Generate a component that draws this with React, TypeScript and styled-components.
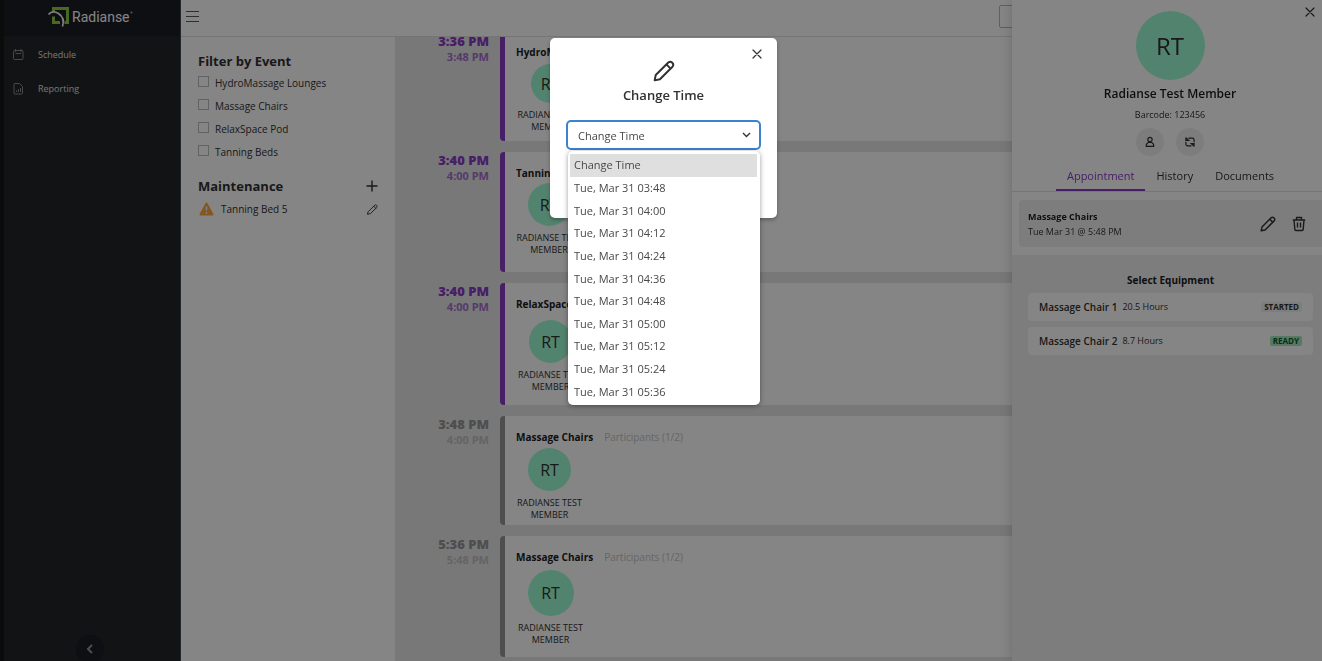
import React from "react";
import styled, { createGlobalStyle } from "styled-components";

const Global = createGlobalStyle`
  *, *::before, *::after { box-sizing: border-box; }
  body {
    margin: 0;
    overflow: hidden;
    background: #fff;
    color: #323130;
    font-family: "Open Sans", "Noto Sans", sans-serif;
    font-size: 11px;
    line-height: 16px;
  }
  h1, h2, h3, p, ul { margin: 0; padding: 0; list-style: none; }
  button { font: inherit; color: inherit; background: none; border: 0; padding: 0; display: inline-flex; align-items: center; justify-content: center; }
  a { color: inherit; text-decoration: none; }
  svg { display: block; flex: none; }
`;

const Shell = styled.div`
  display: flex;
  height: 100vh;
  overflow: hidden;
`;

const Sidebar = styled.aside`
  flex: 0 0 181px;
  display: flex;
  flex-direction: column;
  align-items: center;
  background: #232528;
  border-left: 4px solid #141614;
  border-right: 1px solid #47494b;
`;

const Brand = styled.a`
  align-self: stretch;
  height: 36px;
  display: flex;
  justify-content: center;
  background: #1b1d25;
`;

const NavList = styled.nav`
  flex: 1;
  align-self: stretch;
  display: flex;
  flex-direction: column;
  padding-top: 2px;
`;

const NavLink = styled.a`
  display: flex;
  align-items: center;
  gap: 14px;
  height: 34px;
  padding-left: 8px;
  color: #e0e0e0;
  font-size: 9px;
  svg { color: #8b8d90; }
`;

const Collapse = styled.button`
  width: 28px;
  height: 28px;
  margin: 0 4px -2px 0;
  border-radius: 50%;
  background: #1b1d25;
  color: #8d97a5;
`;

const Main = styled.div`
  flex: 1;
  min-width: 0;
  display: flex;
  flex-direction: column;
`;

const TopBar = styled.header`
  flex: none;
  height: 37px;
  display: flex;
  align-items: center;
  justify-content: space-between;
  padding: 0 120px 4px 5px;
  border-bottom: 1px solid #e1e1e1;
  color: #55585c;
`;

const SearchInput = styled.input`
  width: 203px;
  height: 23px;
  border: 1px solid #b8b8b8;
  border-radius: 2px;
  background: transparent;
`;

const Columns = styled.div`
  flex: 1;
  min-height: 0;
  display: flex;
`;

const Filters = styled.section`
  flex: 0 0 214px;
  display: flex;
  flex-direction: column;
  padding: 15px 17px 0 17px;
`;

const FilterTitle = styled.h2`
  font-size: 13px;
  line-height: 18px;
  font-weight: 700;
`;

const CheckList = styled.div`
  margin-top: 1px;
`;

const CheckRow = styled.label`
  display: flex;
  align-items: center;
  gap: 6px;
  height: 23px;
  font-size: 10px;
`;

const CheckBox = styled.input`
  appearance: none;
  width: 11px;
  height: 11px;
  margin: 0 0 2px;
  border: 1px solid #bdbdbd;
`;

const SplitRow = styled.div<{ $gap: number }>`
  display: flex;
  align-items: center;
  justify-content: space-between;
  height: 22px;
  margin-top: ${(p) => p.$gap}px;
  font-size: 10px;
`;

const Alert = styled.span`
  display: flex;
  align-items: center;
  gap: 7px;
  padding-left: 1px;
`;

const Timeline = styled.main`
  flex: 1;
  min-width: 0;
  overflow: hidden;
  display: flex;
  flex-direction: column;
  justify-content: flex-end;
  gap: 11px;
  padding-bottom: 4px;
  background: #e6e6e6;
`;

const Slot = styled.article<{ $height: number }>`
  flex: none;
  display: grid;
  grid-template-columns: 94px 1fr;
  column-gap: 11px;
  height: ${(p) => p.$height}px;
`;

const Times = styled.div<{ $active?: boolean }>`
  text-align: right;
  font-weight: 700;
  color: ${(p) => (p.$active ? "#8a3ac6" : "#969696")};
  strong { display: block; font-size: 13px; line-height: 16px; }
  span {
    display: block;
    font-size: 11px;
    line-height: 16px;
    color: ${(p) => (p.$active ? "#a56fcc" : "#c0c0c0")};
  }
`;

const Card = styled.div<{ $active?: boolean; $top: number }>`
  border-left: 5px solid ${(p) => (p.$active ? "#8a3ac6" : "#969696")};
  border-radius: 4px 0 0 4px;
  background: #fff;
  padding: ${(p) => p.$top}px 11px 0;
`;

const CardHead = styled.div`
  display: flex;
  gap: 11px;
  line-height: 16px;
  font-size: 10px;
  h3 { font-size: 10px; font-weight: 700; color: #1c1c1c; }
  span { color: #c4c4c4; }
`;

const Person = styled.div<{ $gap: number; $width: number }>`
  width: ${(p) => p.$width}px;
  margin-top: ${(p) => p.$gap}px;
  display: flex;
  flex-direction: column;
  align-items: center;
  gap: 6px;
  text-align: center;
  font-size: 9px;
  line-height: 12px;
`;

const Avatar = styled.div<{ $size: number; $font: number }>`
  width: ${(p) => p.$size}px;
  height: ${(p) => p.$size}px;
  border-radius: 50%;
  display: flex;
  align-items: center;
  justify-content: center;
  background: #9efcd5;
  font-size: ${(p) => p.$font}px;
`;

const Drawer = styled.aside`
  position: fixed;
  inset: 0 0 0 auto;
  width: 310px;
  display: flex;
  flex-direction: column;
  background: #fff;
  box-shadow: 0 0 12px rgba(0, 0, 0, 0.2);
`;

const Close = styled.button<{ $top: number; $right: number }>`
  position: absolute;
  top: ${(p) => p.$top}px;
  right: ${(p) => p.$right}px;
`;

const Profile = styled.header`
  display: flex;
  flex-direction: column;
  align-items: center;
  padding: 11px 0 6px 6px;
  h2 { margin: 6px 0; font-size: 12px; font-weight: 600; line-height: 16px; color: #1c1c1c; }
  p { font-size: 9px; line-height: 14px; }
`;

const Actions = styled.div`
  display: flex;
  gap: 12px;
  margin-top: 6px;
  button { width: 28px; height: 28px; border-radius: 50%; background: #efefef; }
`;

const Tabs = styled.nav`
  display: flex;
  justify-content: center;
  padding-left: 7px;
  border-bottom: 1px solid #e1e1e1;
`;

const Tab = styled.button<{ $active?: boolean }>`
  height: 29px;
  padding: 1px 11px 0;
  border-bottom: 2px solid ${(p) => (p.$active ? "#8a3ac6" : "transparent")};
  color: ${(p) => (p.$active ? "#8a3ac6" : "#323130")};
`;

const Booking = styled.section`
  display: flex;
  align-items: center;
  justify-content: space-between;
  height: 47px;
  margin: 8px 0 8px 7px;
  padding: 0 16px 0 9px;
  border-radius: 4px 0 0 4px;
  background: #f0f0f0;
  font-size: 9px;
  line-height: 15px;
  h3 { font-size: 9px; font-weight: 700; color: #1c1c1c; }
`;

const BookingTools = styled.div`
  display: flex;
  align-items: center;
  gap: 16px;
`;

const Equipment = styled.section`
  flex: 1;
  display: flex;
  flex-direction: column;
  gap: 6px;
  padding: 18px 9px 0 16px;
  background: #f0f0f0;
  h3 { font-size: 10px; line-height: 14px; text-align: center; color: #1c1c1c; }
`;

const Machine = styled.div`
  display: flex;
  align-items: center;
  gap: 5px;
  height: 28px;
  padding: 0 11px;
  border-radius: 4px;
  background: #fff;
  font-size: 9px;
  strong { font-size: 10px; font-weight: 600; }
`;

const Status = styled.span<{ $ready?: boolean }>`
  margin-left: auto;
  padding: 0 3px;
  border-radius: 2px;
  font-size: 8px;
  line-height: 10px;
  font-weight: 700;
  background: ${(p) => (p.$ready ? "#a8e6bd" : "#f2f2f2")};
  color: ${(p) => (p.$ready ? "#0a5a30" : "#323130")};
`;

const Overlay = styled.div`
  position: fixed;
  inset: 0;
  display: flex;
  flex-direction: column;
  align-items: center;
  padding-top: 38px;
  background: rgba(0, 0, 0, 0.48);
`;

const Dialog = styled.div`
  position: relative;
  width: 227px;
  height: 180px;
  margin-left: 5px;
  padding: 22px 16px 0;
  display: flex;
  flex-direction: column;
  align-items: center;
  border-radius: 5px;
  background: #fff;
  box-shadow: 0 2px 4px rgba(0, 0, 0, 0.3);
  h1 { margin: 3px 0 15px; font-size: 13px; line-height: 20px; font-weight: 600; }
`;

const SelectField = styled.label`
  position: relative;
  align-self: stretch;
  display: flex;
  svg { position: absolute; right: 10px; top: 10px; }
`;

const Select = styled.select`
  appearance: none;
  width: 100%;
  height: 30px;
  padding: 1px 10px 0;
  border: 2px solid #3b82d0;
  border-radius: 5px;
  background: #fff;
  color: #48484a;
  font: inherit;
  outline: 0;
`;

const Menu = styled.ul`
  position: absolute;
  top: 113px;
  left: 18px;
  right: 17px;
  height: 254px;
  display: flex;
  flex-direction: column;
  && { padding: 3px 3px 2px 2px; }
  border-radius: 5px;
  background: #fff;
  box-shadow: 0 1px 5px rgba(0, 0, 0, 0.4);
`;

const Option = styled.li<{ $selected?: boolean }>`
  flex: 1;
  display: flex;
  align-items: center;
  padding-left: 4px;
  color: #48484a;
  background: ${(p) => (p.$selected ? "#dfdfdf" : "transparent")};
`;

const Pencil = ({ size, stroke }: { size: number; stroke: number }) => (
  <svg width={size} height={size} viewBox="0 0 20 20" fill="none" stroke="currentColor" strokeWidth={stroke} strokeLinejoin="round" strokeLinecap="round" aria-hidden="true">
    <path d="M2.500 13.700L13.900 2.300a2.700 2.700 0 0 1 3.800 3.800L6.300 17.500L1.500 18.500ZM12.200 4l3.800 3.800" />
  </svg>
);

const Cross = ({ size }: { size: number }) => (
  <svg width={size} height={size} viewBox="0 0 10 10" stroke="currentColor" strokeWidth="1.2" strokeLinecap="round" aria-hidden="true">
    <path d="M1 1l8 8M9 1L1 9" />
  </svg>
);

const slots = [
  { start: "3:36 PM", end: "3:48 PM", name: "HydroMassage Lounges", height: 108, top: 11, active: true, size: 39, gap: 4, width: 68 },
  { start: "3:40 PM", end: "4:00 PM", name: "Tanning Beds", height: 120, top: 13, active: true, size: 43, gap: 2, width: 66 },
  { start: "3:40 PM", end: "4:00 PM", name: "RelaxSpace Pod", height: 122, top: 13, active: true, size: 43, gap: 8, width: 69 },
  { start: "3:48 PM", end: "4:00 PM", name: "Massage Chairs", height: 109, top: 13, active: false, size: 43, gap: 3, width: 67 },
  { start: "5:36 PM", end: "5:48 PM", name: "Massage Chairs", height: 121, top: 13, active: false, size: 46, gap: 5, width: 69 },
];

const events = ["HydroMassage Lounges", "Massage Chairs", "RelaxSpace Pod", "Tanning Beds"];
const times = ["Change Time", ...["03:48", "04:00", "04:12", "04:24", "04:36", "04:48", "05:00", "05:12", "05:24", "05:36"].map((t) => `Tue, Mar 31 ${t}`)];

const Logo = () => (
  <svg width="90" height="32" viewBox="0 0 90 32" role="img" aria-label="Radianse">
    <path d="M6.500 12V8.500H20.500V22.500H17.500M6.500 16.500V22.500H13" fill="none" stroke="#8ac93c" strokeWidth="3" />
    <path d="M1.500 14.500C4 11.500 8 11.500 11.500 13.500C16 16.500 17.500 20.500 15.500 26.500" fill="none" stroke="#f4f4f4" strokeWidth="1.800" />
    <text x="25" y="22" fill="#fff" fontFamily="Roboto, sans-serif" fontSize="14">Radianse</text>
    <circle cx="84.500" cy="12.500" r="1" fill="#aaa" />
  </svg>
);

export default function App() {
  return (
    <>
      <Global />
      <Shell>
        <Sidebar>
          <Brand href="#"><Logo /></Brand>
          <NavList>
            <NavLink href="#">
              <svg width="12" height="12" viewBox="0 0 12 12" fill="none" stroke="currentColor"><rect x="1.500" y="1.500" width="9.500" height="9" rx="1" /><path d="M3.500 0v3M9 0v3M3.500 4.500h5.500" /></svg>
              Schedule
            </NavLink>
            <NavLink href="#">
              <svg width="12" height="12" viewBox="0 0 12 12" fill="none" stroke="currentColor"><path d="M3 .500h4.500L10.500 3.500v6.500a1 1 0 0 1-1 1H3a1 1 0 0 1-1-1V1.500a1 1 0 0 1 1-1zM4.500 9V7.500M6.500 9V6M8.500 9V5" /></svg>
              Reporting
            </NavLink>
          </NavList>
          <Collapse aria-label="Collapse menu">
            <svg width="10" height="12" viewBox="0 0 10 12" fill="none" stroke="currentColor" strokeWidth="2"><path d="M7 2L3 6l4 4" /></svg>
          </Collapse>
        </Sidebar>
        <Main>
          <TopBar>
            <button aria-label="Menu">
              <svg width="13" height="11" viewBox="0 0 13 11" stroke="currentColor"><path d="M0 .500h13M0 5.500h13M0 10.500h13" /></svg>
            </button>
            <SearchInput aria-label="Search" />
          </TopBar>
          <Columns>
            <Filters>
              <FilterTitle>Filter by Event</FilterTitle>
              <CheckList>
                {events.map((e) => (
                  <CheckRow key={e}><CheckBox type="checkbox" />{e}</CheckRow>
                ))}
              </CheckList>
              <SplitRow $gap={12}>
                <FilterTitle>Maintenance</FilterTitle>
                <button aria-label="Add">
                  <svg width="12" height="12" viewBox="0 0 12 12" stroke="currentColor" strokeWidth="1.400"><path d="M6 .500v11M.500 6h11" /></svg>
                </button>
              </SplitRow>
              <SplitRow $gap={1}>
                <Alert>
                  <svg width="15" height="14" viewBox="0 0 15 14"><path d="M7.500 1.500L13.500 12.500H1.500Z" fill="#ffa63a" stroke="#ffa63a" strokeWidth="2" strokeLinejoin="round" /><path d="M7.500 4.500V8.500M7.500 10v1.500" stroke="#fff" strokeWidth="1.400" /></svg>
                  Tanning Bed 5
                </Alert>
                <button aria-label="Edit"><Pencil size={11} stroke={1.7} /></button>
              </SplitRow>
            </Filters>
            <Timeline>
              {slots.map((s, i) => (
                <Slot key={i} $height={s.height}>
                  <Times $active={s.active}><strong>{s.start}</strong><span>{s.end}</span></Times>
                  <Card $active={s.active} $top={s.top}>
                    <CardHead><h3>{s.name}</h3><span>Participants (1/2)</span></CardHead>
                    <Person $gap={s.gap} $width={s.width}>
                      <Avatar $size={s.size} $font={16}>RT</Avatar>
                      RADIANSE TEST MEMBER
                    </Person>
                  </Card>
                </Slot>
              ))}
            </Timeline>
          </Columns>
        </Main>
      </Shell>
      <Drawer>
        <Close $top={7} $right={7} aria-label="Close panel"><Cross size={10} /></Close>
        <Profile>
          <Avatar $size={69} $font={24}>RT</Avatar>
          <h2>Radianse Test Member</h2>
          <p>Barcode: 123456</p>
          <Actions>
            <button aria-label="Profile">
              <svg width="10" height="12" viewBox="0 0 10 12" fill="none" stroke="currentColor" strokeWidth="1.200"><circle cx="5" cy="3.500" r="2.200" /><path d="M3.500 6.500C1.800 7 1.200 8.200 1.200 10.300H8.800C8.800 8.200 8.200 7 6.500 6.500Z" strokeLinejoin="round" /></svg>
            </button>
            <button aria-label="Refresh">
              <svg width="12" height="12" viewBox="0 0 12 12" fill="none" stroke="currentColor" strokeWidth="1.200"><path d="M4.500 2.200H8.300A1.800 1.800 0 0 1 10.100 4V6.200M7.500 9.800H3.700A1.800 1.800 0 0 1 1.900 8V5.800M1.900 1.500V4.300H4.700L1.900 1.800M10.100 10.500V7.700H7.300L10.100 10.200" /></svg>
            </button>
          </Actions>
        </Profile>
        <Tabs>
          <Tab $active>Appointment</Tab>
          <Tab>History</Tab>
          <Tab>Documents</Tab>
        </Tabs>
        <Booking>
          <div>
            <h3>Massage Chairs</h3>
            <p>Tue Mar 31 @ 5:48 PM</p>
          </div>
          <BookingTools>
            <button aria-label="Edit appointment"><Pencil size={16} stroke={1.8} /></button>
            <button aria-label="Delete appointment">
              <svg width="14" height="16" viewBox="0 0 14 16" fill="none" stroke="currentColor" strokeWidth="1.400" strokeLinejoin="round"><path d="M.800 4h12.400M4.500 4V1.500h5V4M2 4l.800 9.300a1.200 1.200 0 0 0 1.200 1.200h6a1.200 1.200 0 0 0 1.200-1.200L12 4M5.500 6.500v5M8.500 6.500v5" /></svg>
            </button>
          </BookingTools>
        </Booking>
        <Equipment>
          <h3>Select Equipment</h3>
          <Machine><strong>Massage Chair 1</strong>20.5 Hours<Status>STARTED</Status></Machine>
          <Machine><strong>Massage Chair 2</strong>8.7 Hours<Status $ready>READY</Status></Machine>
        </Equipment>
      </Drawer>
      <Overlay>
        <Dialog role="dialog" aria-label="Change Time">
          <Close $top={11} $right={15} aria-label="Close"><Cross size={10} /></Close>
          <Pencil size={22} stroke={1.8} />
          <h1>Change Time</h1>
          <SelectField>
            <Select aria-label="Time" defaultValue={times[0]}>
              {times.map((t) => <option key={t}>{t}</option>)}
            </Select>
            <svg width="9" height="9" viewBox="0 0 9 9" fill="none" stroke="#333" strokeWidth="1.400"><path d="M1 3l3.500 3.500L8 3" /></svg>
          </SelectField>
          <Menu>
            {times.map((t, i) => <Option key={t} $selected={i === 0}>{t}</Option>)}
          </Menu>
        </Dialog>
      </Overlay>
    </>
  );
}
